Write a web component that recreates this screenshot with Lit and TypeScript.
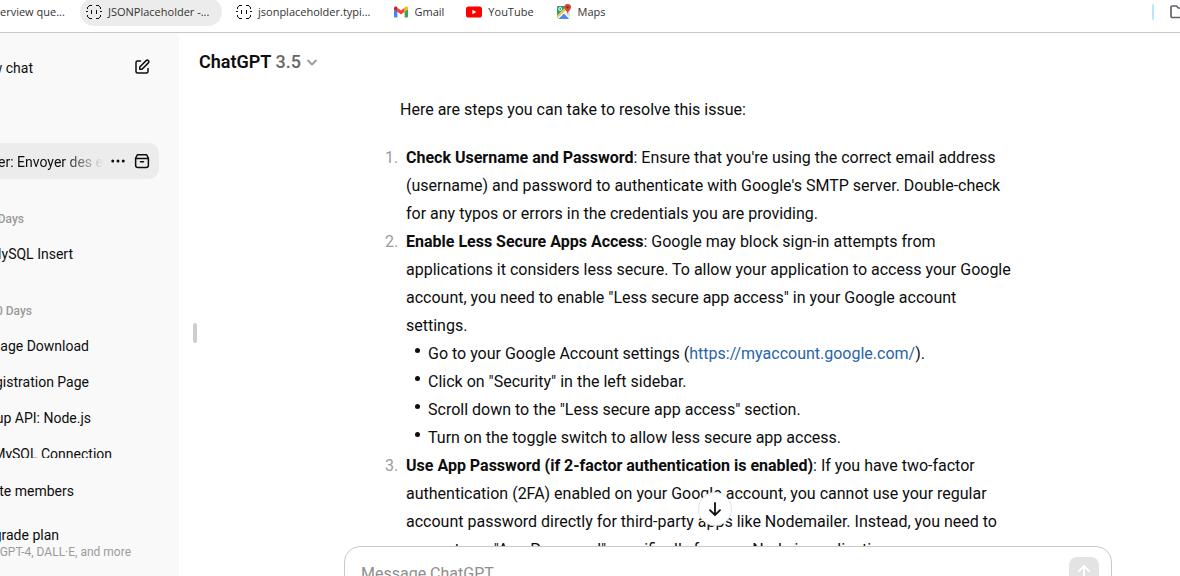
import { LitElement, html, css, nothing, TemplateResult } from 'lit';
import { customElement } from 'lit/decorators.js';
import { classMap } from 'lit/directives/class-map.js';

const bracesIcon = html`<svg width="16" height="16" viewBox="0 0 16 16" fill="none" stroke="#111" shape-rendering="crispEdges">
  <path d="M3 1.500h3M10 1.500h3M3 14.500h3M10 14.500h3M2 2.500h1M13 2.500h1M2 13.500h1M13 13.500h1M1.500 3v2M14.500 3v2M1.500 11v2M14.500 11v2M0 7.500h2M14 7.500h2M5.500 6v4M10.500 6v4"/>
</svg>`;

const gmailIcon = html`<svg width="16" height="16" viewBox="0 0 16 16">
  <path fill="#4285f4" d="M1 5v7.5c0 .5.4 1 1 1h2.4V7.2z"/>
  <path fill="#34a853" d="M15 5v7.5c0 .5-.4 1-1 1h-2.4V7.2z"/>
  <path fill="#ea4335" d="M4.4 7.8V3.7L8 6.4l3.6-2.7v4.1L8 10.5z"/>
  <path fill="#c5221f" d="M1 5.3V4c0-1.4 1.5-2 2.5-1.2l.9.8v4.2z"/>
  <path fill="#fbbc04" d="M15 5.3V4c0-1.4-1.5-2-2.5-1.2l-.9.8v4.2z"/>
</svg>`;

const youtubeIcon = html`<svg width="16" height="16" viewBox="0 0 16 16">
  <rect y="2.5" width="16" height="11" rx="2.6" fill="#f00"/>
  <path fill="#fff" d="M6.4 5.7v4.6L10.4 8z"/>
</svg>`;

const mapsIcon = html`<svg width="16" height="16" viewBox="0 0 16 16">
  <path fill="#34a065" d="M2.2 2H11L1 12V3.2C1 2.500 1.500 2 2.200 2z"/>
  <path fill="#fff" d="M1 14.300 12.200 3l1 1L2.500 15z"/>
  <path fill="#fbc02d" d="M1 12.500 10.500 3l1.500 1.300L1 14.500z"/>
  <path fill="#dfe3e6" d="M14 5v9L9.500 9.500z"/>
  <path fill="#4a8af4" d="M2.300 15 8 9.500 13.200 15z"/>
  <circle cx="4.200" cy="5" r="1.500" fill="none" stroke="#fff"/>
  <path fill="#db4437" d="M11.700 0a3.300 3.300 0 0 1 3.300 3.300c0 2.300-2.600 3.200-3.300 6.700-.7-3.500-3.300-4.400-3.300-6.700A3.300 3.300 0 0 1 11.700 0z"/>
  <circle cx="11.700" cy="3.300" r="1.100" fill="#7b231c"/>
</svg>`;

const folderIcon = html`<svg width="18" height="16" viewBox="0 0 18 16" fill="none" stroke="#5f6368" stroke-width="1.700">
  <path d="M1 3.200C1 2.500 1.500 2 2.200 2h4.300l1.800 2h7c.7 0 1.200.5 1.200 1.200v7.100c0 .7-.5 1.200-1.200 1.200H2.200c-.7 0-1.200-.5-1.200-1.200z"/>
</svg>`;

const composeIcon = html`<svg width="18" height="18" viewBox="0 0 24 24" fill="currentColor">
  <path fill-rule="evenodd" clip-rule="evenodd" d="M16.793 2.793a3.121 3.121 0 1 1 4.414 4.414l-8.500 8.500A1 1 0 0 1 12 16H9a1 1 0 0 1-1-1v-3a1 1 0 0 1 .293-.707zm3 1.414a1.121 1.121 0 0 0-1.586 0L10 12.414V14h1.586l8.207-8.207a1.121 1.121 0 0 0 0-1.586M6 5a1 1 0 0 0-1 1v12a1 1 0 0 0 1 1h12a1 1 0 0 0 1-1v-4a1 1 0 1 1 2 0v4a3 3 0 0 1-3 3H6a3 3 0 0 1-3-3V6a3 3 0 0 1 3-3h4a1 1 0 1 1 0 2z"/>
</svg>`;

const moreIcon = html`<svg width="18" height="18" viewBox="0 0 24 24" fill="currentColor">
  <circle cx="5" cy="12" r="2"/><circle cx="12" cy="12" r="2"/><circle cx="19" cy="12" r="2"/>
</svg>`;

const archiveIcon = html`<svg width="18" height="18" viewBox="0 0 24 24" fill="none" stroke="currentColor" stroke-width="2" stroke-linecap="round">
  <path d="M6 3.500h12l2.500 4.500v9.500a3 3 0 0 1-3 3h-11a3 3 0 0 1-3-3V8zM3.500 8.500h17M10 13h4" stroke-linejoin="round"/>
</svg>`;

const chevronIcon = html`<svg width="16" height="16" viewBox="0 0 16 16" fill="none" stroke="#9b9b9b" stroke-width="1.800" stroke-linecap="round" stroke-linejoin="round">
  <path d="M4 6.500 8 10.500l4-4"/>
</svg>`;

const arrowDownIcon = html`<svg width="18" height="18" viewBox="0 0 18 18" fill="none" stroke="currentColor" stroke-width="1.800" stroke-linecap="round" stroke-linejoin="round">
  <path d="M9 3v12M4 10.200 9 15.200l5-5"/>
</svg>`;

const arrowUpIcon = html`<svg width="24" height="24" viewBox="0 0 24 24" fill="none" stroke="#fff" stroke-width="2" stroke-linecap="round" stroke-linejoin="round">
  <path d="M12 20V6M7 11l5-5 5 5"/>
</svg>`;

interface Bookmark { label: string; icon?: TemplateResult; long?: boolean; hovered?: boolean }

const bookmarks: Bookmark[] = [
  { label: 'erview que...' },
  { label: 'JSONPlaceholder -...', icon: bracesIcon, long: true, hovered: true },
  { label: 'jsonplaceholder.typi...', icon: bracesIcon, long: true },
  { label: 'Gmail', icon: gmailIcon },
  { label: 'YouTube', icon: youtubeIcon },
  { label: 'Maps', icon: mapsIcon },
];

/* `end` is where a label stops inside the visible part of the sidebar. */
interface Row { label: string; end: number }

const groups: { label: string; end: number; rows: Row[] }[] = [
  { label: 's 7 Days', end: 24, rows: [{ label: 'MySQL Insert', end: 73 }] },
  {
    label: 's 30 Days', end: 32, rows: [
      { label: 'mage Download', end: 89 },
      { label: 'egistration Page', end: 89 },
      { label: 'tup API: Node.js', end: 91 },
      { label: 's MySQL Connection', end: 112 },
    ],
  },
];

@customElement('bookmark-bar')
class BookmarkBar extends LitElement {
  static styles = css`
    :host { display: block; border-bottom: 1px solid #c8c8c8; background: #fff; }
    .bar { display: flex; align-items: flex-start; justify-content: space-between; height: 32px; overflow: hidden; }
    .links { display: flex; gap: 8px; margin-top: -2px; }
    .link {
      display: flex; align-items: center; gap: 6px; height: 28px; padding: 0 8px 0 6px; box-sizing: border-box;
      border-radius: 14px; white-space: nowrap; text-decoration: none;
      font: 11px/16px "Open Sans", "Noto Sans", sans-serif; color: #333;
    }
    .link:first-child { padding-left: 0; width: 72px; }
    .long { min-width: 142px; }
    .hovered { background: #ececec; }
    .rest { display: flex; gap: 16px; align-items: center; height: 24px; margin-right: -8px; }
    .rule { width: 2px; height: 16px; border-radius: 1px; background: #b3e8f5; }
    .folder { display: flex; padding: 0; border: 0; background: none; }
    svg { display: block; flex: none; }
  `;
  render() {
    return html`<div class="bar">
      <nav class="links">
        ${bookmarks.map(b => html`<a href="#" class=${classMap({ link: true, long: !!b.long, hovered: !!b.hovered })}>${b.icon ?? nothing}<span>${b.label}</span></a>`)}
      </nav>
      <div class="rest"><span class="rule"></span><button class="folder" aria-label="All bookmarks">${folderIcon}</button></div>
    </div>`;
  }
}

@customElement('chat-sidebar')
class ChatSidebar extends LitElement {
  static styles = css`
    :host {
      display: flex; flex-direction: column; flex: none; width: 179px; overflow: hidden;
      background: #f9f9f9; color: #0d0d0d; font-size: 14px; line-height: 20px;
    }
    svg { display: block; }
    a { color: inherit; text-decoration: none; }
    button { display: flex; padding: 0; border: 0; background: none; color: inherit; }
    .row { display: flex; align-items: center; height: 36px; margin-right: 20px; }
    .end { display: flex; flex: none; justify-content: flex-end; padding-top: 2px; white-space: nowrap; }
    .top { justify-content: space-between; flex: none; padding-right: 8px; margin-top: 16px; }
    .history { flex: 1; min-height: 0; overflow: hidden; padding-top: 58px; }
    .active { gap: 6px; padding-right: 8px; border-radius: 0 10px 10px 0; background: #ececec; }
    .fade {
      flex: 1; display: flex; justify-content: flex-end; min-width: 0; padding-top: 2px; overflow: hidden; white-space: nowrap;
      -webkit-mask-image: linear-gradient(to left, transparent, #000 40px);
      mask-image: linear-gradient(to left, transparent, #000 40px);
    }
    .group { margin-top: 20px; }
    .heading { margin: 0; height: 36px; display: flex; align-items: center; font-size: 12px; line-height: 24px; font-weight: 500; color: #9b9b9b; }
    .heading .end { padding-top: 4px; }
    .list { margin: 0; padding: 0; list-style: none; }
    .foot { flex: none; display: flex; flex-direction: column; height: 118px; padding-top: 14px; box-sizing: border-box; }
    .plan { display: flex; flex-direction: column; margin-top: 16px; line-height: 18px; }
    .plan .small { padding-top: 1px; font-size: 12px; line-height: 14px; color: #9b9b9b; }
  `;
  private end(label: string, end: number, extra = '') {
    return html`<span class="end ${extra}" style="width:${end}px">${label}</span>`;
  }
  render() {
    return html`
      <div class="row top"><a href="#">${this.end('w chat', 33)}</a><button aria-label="New chat">${composeIcon}</button></div>
      <div class="history">
        <div class="row active">
          <a class="fade" href="#">ler: Envoyer des e</a>
          <button aria-label="More">${moreIcon}</button><button aria-label="Archive">${archiveIcon}</button>
        </div>
        ${groups.map(g => html`<section class="group">
          <h3 class="heading">${this.end(g.label, g.end)}</h3>
          <ul class="list">${g.rows.map(r => html`<li class="row"><a href="#">${this.end(r.label, r.end)}</a></li>`)}</ul>
        </section>`)}
      </div>
      <div class="foot">
        <a class="row" href="#">${this.end('ite members', 74)}</a>
        <a class="plan" href="#">${this.end('ograde plan', 59)}${this.end('GPT-4, DALL·E, and more', 131, 'small')}</a>
      </div>`;
  }
}

@customElement('chat-answer')
class ChatAnswer extends LitElement {
  static styles = css`
    :host { display: block; font-size: 16px; line-height: 28px; color: #0d0d0d; }
    p { margin: 0 0 20px; }
    ol, ul { margin: 0; padding: 0; list-style: none; }
    ol { counter-reset: step; }
    .step { display: grid; grid-template-columns: 21px minmax(0, 1fr); margin-left: -15px; counter-increment: step; }
    .step::before { content: counter(step) "."; color: #9b9b9b; }
    .sub { display: grid; grid-template-columns: 13px minmax(0, 1fr); align-items: start; margin-left: 9px; }
    .sub::before { content: ""; width: 5px; height: 5px; margin-top: 8px; border-radius: 50%; background: #0d0d0d; }
    .text { white-space: nowrap; }
    a { color: #2964aa; text-decoration: none; }
    b { font-weight: 700; }
  `;
  render() {
    return html`
      <p>Here are steps you can take to resolve this issue:</p>
      <ol>
        <li class="step"><div class="text"><b>Check Username and Password</b>: Ensure that you're using the correct email address<br>(username) and password to authenticate with Google's SMTP server. Double-check<br>for any typos or errors in the credentials you are providing.</div></li>
        <li class="step"><div class="text"><b>Enable Less Secure Apps Access</b>: Google may block sign-in attempts from<br>applications it considers less secure. To allow your application to access your Google<br>account, you need to enable "Less secure app access" in your Google account<br>settings.
          <ul>
            <li class="sub"><span>Go to your Google Account settings (<a href="https://myaccount.google.com/">https://myaccount.google.com/</a>).</span></li>
            <li class="sub"><span>Click on "Security" in the left sidebar.</span></li>
            <li class="sub"><span>Scroll down to the "Less secure app access" section.</span></li>
            <li class="sub"><span>Turn on the toggle switch to allow less secure app access.</span></li>
          </ul></div></li>
        <li class="step"><div class="text"><b>Use App Password (if 2-factor authentication is enabled)</b>: If you have two-factor<br>authentication (2FA) enabled on your Google account, you cannot use your regular<br>account password directly for third-party apps like Nodemailer. Instead, you need to<br>generate an "App Password" specifically for your Node.js application.</div></li>
      </ol>`;
  }
}

@customElement('app-root')
class AppRoot extends LitElement {
  static styles = css`
    :host {
      display: flex; flex-direction: column; height: 100vh; overflow: hidden; background: #fff;
      font-family: Roboto, "Liberation Sans", sans-serif; color: #0d0d0d;
    }
    bookmark-bar { flex: none; }
    svg { display: block; }
    .body { display: flex; flex: 1; min-height: 0; }
    .gutter { flex: none; display: flex; align-items: center; padding: 56px 0 0 14px; }
    .handle { width: 4px; height: 20px; border-radius: 2px; background: #cdcdcd; }
    .main { flex: 1; min-width: 0; display: flex; flex-direction: column; }
    .model {
      display: flex; align-items: center; gap: 3px; align-self: flex-start; flex: none; height: 58px; margin-left: 2px; padding: 0; border: 0;
      background: none; font: 600 18px/28px Roboto, "Liberation Sans", sans-serif; color: #0d0d0d;
    }
    .version { color: #676767; font-weight: 500; }
    .thread { position: relative; flex: 1; min-height: 0; }
    .scroll { height: 100%; overflow: hidden; padding: 5px 68px 0 203px; box-sizing: border-box; }
    .down {
      position: absolute; left: calc(50% + 26px); bottom: 20px; width: 34px; height: 34px; margin-left: -17px;
      display: flex; align-items: center; justify-content: center; padding: 0;
      border: 1px solid #e3e3e3; border-radius: 50%; background: #fff; color: #0d0d0d;
    }
    .composer { flex: none; height: 30px; margin: 0 68px 0 147px; }
    .box {
      display: flex; align-items: flex-start; height: 52px; padding: 10px 12px 0 16px; box-sizing: border-box;
      border: 1px solid #c8c8c8; border-radius: 16px; background: #fff;
    }
    .input {
      flex: 1; min-width: 0; height: 24px; margin-top: 5px; padding: 0; border: 0; outline: 0; resize: none; overflow: hidden;
      background: none; font: 16px/24px Roboto, "Liberation Sans", sans-serif;
    }
    .input::placeholder { color: #8e8e8e; opacity: 1; }
    .send { flex: none; display: flex; align-items: center; justify-content: center; width: 30px; height: 30px; padding: 0; border: 0; border-radius: 8px; background: #e3e3e3; }
  `;
  render() {
    return html`
      <bookmark-bar></bookmark-bar>
      <div class="body">
        <chat-sidebar></chat-sidebar>
        <div class="gutter"><div class="handle"></div></div>
        <main class="main">
          <button class="model"><span>ChatGPT <span class="version">3.5</span></span>${chevronIcon}</button>
          <div class="thread">
            <div class="scroll"><chat-answer></chat-answer></div>
            <button class="down" aria-label="Scroll to bottom">${arrowDownIcon}</button>
          </div>
          <div class="composer"><div class="box">
            <textarea class="input" rows="1" aria-label="Message ChatGPT" placeholder="Message ChatGPT"></textarea>
            <button class="send" aria-label="Send">${arrowUpIcon}</button>
          </div></div>
        </main>
      </div>`;
  }
}
